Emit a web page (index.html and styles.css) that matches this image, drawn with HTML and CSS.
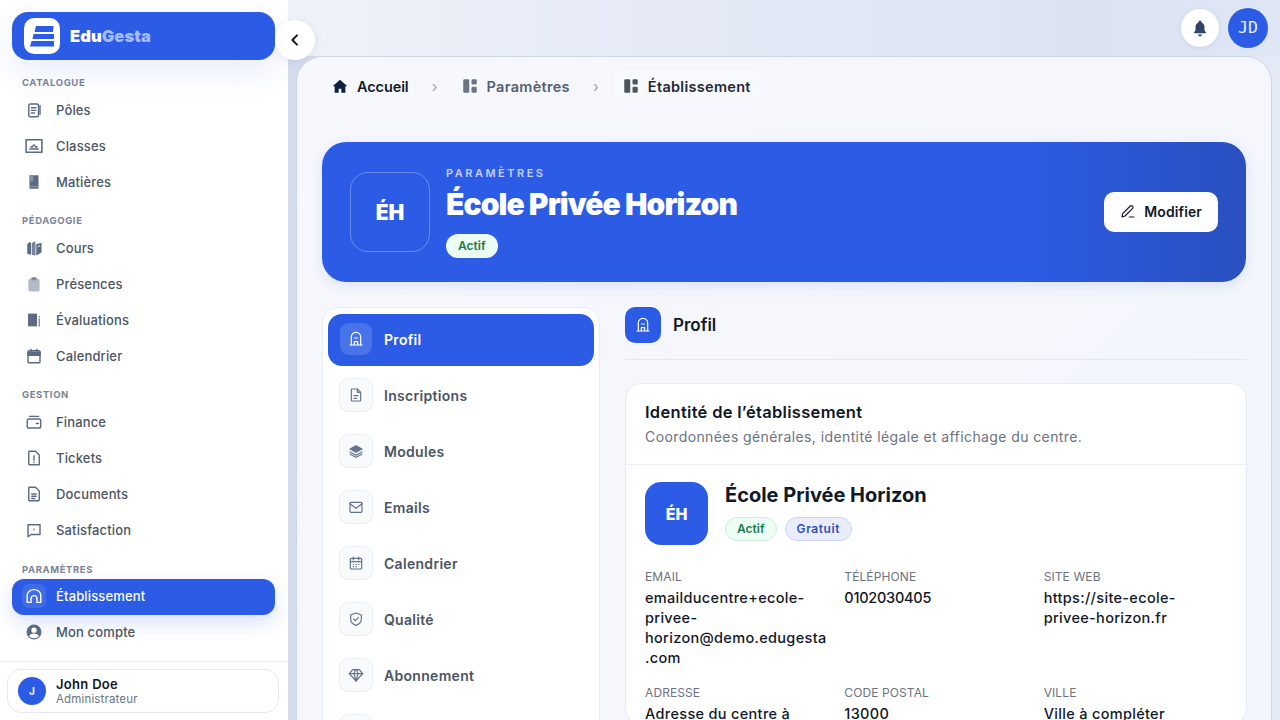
FILE: index.html
```html
<!DOCTYPE html>
<html lang="fr">
  <head>
    <meta charset="UTF-8" />
    <meta name="viewport" content="width=device-width, initial-scale=1.0" />
    <title>EduGesta - Établissement</title>
    <link rel="stylesheet" href="styles.css">
  </head>
  <body>
    <aside class="sidebar">
      <div class="brand">
        <div class="brand_logo">
          <svg viewBox="0 0 36 36" width="36" height="36">
            <path d="M12 8h17.500l-.5 6H10.500z" fill="#2c5ce6" />
            <path d="M9.500 16H30v5H8.500z" fill="#2c5ce6" />
            <path d="M7.500 23H30v5.500H6z" fill="#2c5ce6" />
          </svg>
        </div>
        <span class="brand_name">Edu<em>Gesta</em></span>
      </div>

      <nav class="menu">
        <div class="menu_group">
          <div class="menu_label">Catalogue</div>
          <a class="menu_item">
            <span class="menu_icon"><svg viewBox="0 0 24 24" class="ico"><rect x="5" y="4" width="13" height="17" rx="2" /><path d="M8.500 9h6M8.500 12.500h6M8.500 16h4M20 6v12" /></svg></span>
            Pôles
          </a>
          <a class="menu_item">
            <span class="menu_icon"><svg viewBox="0 0 24 24" class="ico ico-wide"><rect x="2.500" y="4.500" width="19" height="15" /><path d="M7 15.500h10M8.500 13h2M13.500 13h2M11 11h2" /></svg></span>
            Classes
          </a>
          <a class="menu_item">
            <span class="menu_icon"><svg viewBox="0 0 24 24" class="ico_fill"><path d="M6 3h12v18H6z" fill="#5d6b82" /><path d="M6 3h5v8H6z" fill="#8792a5" /><path d="M6 17.500h12V19H6z" fill="#8792a5" /></svg></span>
            Matières
          </a>
        </div>

        <div class="menu_group">
          <div class="menu_label">Pédagogie</div>
          <a class="menu_item">
            <span class="menu_icon"><svg viewBox="0 0 24 24" class="ico_fill"><path d="M3 7l3-3 2 1v16l-5-1.500z" fill="#5d6b82" /><path d="M9 6l3-3 2 1.500V22l-5-1z" fill="#77839a" /><path d="M15 7l7-2v13l-7 4z" fill="#5d6b82" /><path d="M17 10l3-1" stroke="#fff" stroke-width="1.200" /></svg></span>
            Cours
          </a>
          <a class="menu_item">
            <span class="menu_icon"><svg viewBox="0 0 24 24" class="ico_fill"><rect x="4.500" y="5" width="15" height="17" rx="2.500" fill="#b3bac8" /><rect x="8.500" y="3" width="7" height="4" rx="1" fill="#7f8a9e" /></svg></span>
            Présences
          </a>
          <a class="menu_item">
            <span class="menu_icon"><svg viewBox="0 0 24 24" class="ico_fill"><path d="M4 3.500h12v17H4z" fill="#5d6b82" /><path d="M18 10h2v10.500h-2zM18 6.500h2v2h-2z" fill="#8792a5" /></svg></span>
            Évaluations
          </a>
          <a class="menu_item">
            <span class="menu_icon"><svg viewBox="0 0 24 24" class="ico"><rect x="4" y="5" width="16" height="16" rx="1.500" /><path d="M4 7h16v4H4z" fill="#5d6b82" /><path d="M8 3v3M16 3v3" /></svg></span>
            Calendrier
          </a>
        </div>

        <div class="menu_group">
          <div class="menu_label">Gestion</div>
          <a class="menu_item">
            <span class="menu_icon"><svg viewBox="0 0 24 24" class="ico"><rect x="3" y="8" width="18" height="12" rx="2.500" /><path d="M6 4.500h12M15 14h3" /></svg></span>
            Finance
          </a>
          <a class="menu_item">
            <span class="menu_icon"><svg viewBox="0 0 24 24" class="ico"><path d="M6 3h8l5 5v13H6a1 1 0 0 1-1-1V4a1 1 0 0 1 1-1z" /><path d="M12 9v6M12 17.500v.5" /></svg></span>
            Tickets
          </a>
          <a class="menu_item">
            <span class="menu_icon"><svg viewBox="0 0 24 24" class="ico"><path d="M6 3h8l5 5v12a1 1 0 0 1-1 1H6a1 1 0 0 1-1-1V4a1 1 0 0 1 1-1z" /><path d="M9 12h6M9 15h6M9 18h4" /></svg></span>
            Documents
          </a>
          <a class="menu_item">
            <span class="menu_icon"><svg viewBox="0 0 24 24" class="ico"><path d="M4 5h16v13H8l-4 3z" /><path d="M12 11v.5" /></svg></span>
            Satisfaction
          </a>
        </div>

        <div class="menu_group menu_group-last">
          <div class="menu_label">Paramètres</div>
          <a class="menu_item menu_item-active">
            <span class="menu_icon"><svg viewBox="0 0 24 24" class="ico ico-white"><path d="M3 20.500V10.500C3 7 7 3.500 12 3.500s9 3.500 9 7v10h-5v-5a4 4 0 0 0-8 0v5z" /></svg></span>
            Établissement
          </a>
          <a class="menu_item">
            <span class="menu_icon"><svg viewBox="0 0 24 24" class="ico_fill"><circle cx="12" cy="12" r="10" fill="#5d6b82" /><circle cx="12" cy="9.500" r="3.500" fill="#fff" /><path d="M5.500 18c1-3 3.500-4 6.500-4s5.500 1 6.500 4c-3.500 3-9.500 3-13 0z" fill="#fff" /></svg></span>
            Mon compte
          </a>
        </div>
      </nav>

      <div class="sidebar_footer">
        <div class="user_card">
          <div class="user_avatar">J</div>
          <div>
            <div class="user_name">John Doe</div>
            <div class="user_role">Administrateur</div>
          </div>
        </div>
      </div>
    </aside>

    <button class="collapse_btn">
      <svg viewBox="0 0 24 24" width="16" height="16" fill="none" stroke="#111827" stroke-width="3" stroke-linecap="round" stroke-linejoin="round"><path d="M15 5l-7 7 7 7" /></svg>
    </button>

    <div class="main">
      <header class="topbar">
        <button class="bell_btn">
          <svg viewBox="0 0 24 24" width="18" height="18"><path d="M12 2a2 2 0 0 0-2 2v.500C7 5.500 6 8 6 11v4l-2 3v1h16v-1l-2-3v-4c0-3-1-5.500-4-6.500V4a2 2 0 0 0-2-2z" fill="#2f4468" /><path d="M9.500 20.500a2.500 2.500 0 0 0 5 0z" fill="#2f4468" /></svg>
        </button>
        <div class="top_avatar">JD</div>
      </header>

      <div class="panel">
        <div class="crumbs">
          <a class="crumb crumb-home">
            <svg viewBox="0 0 24 24" width="16" height="16"><path d="M12 2.500L1 12.500h3V22h6v-6h4v6h6v-9.500h3z" fill="#0f1f3d" /></svg>
            Accueil
          </a>
          <span class="crumb_sep">›</span>
          <a class="crumb">
            <svg viewBox="0 0 24 24" width="18" height="18" fill="#6b7484"><rect x="3" y="3" width="8" height="18" rx="1.500" /><rect x="14" y="3" width="7" height="7" rx="1.500" /><rect x="14" y="13" width="7" height="8" rx="1.500" /></svg>
            Paramètres
          </a>
          <span class="crumb_sep">›</span>
          <a class="crumb crumb-current">
            <svg viewBox="0 0 24 24" width="18" height="18" fill="#4b5563"><rect x="3" y="3" width="8" height="18" rx="1.500" /><rect x="14" y="3" width="7" height="7" rx="1.500" /><rect x="14" y="13" width="7" height="8" rx="1.500" /></svg>
            Établissement
          </a>
        </div>

        <section class="hero">
          <div class="hero_logo">ÉH</div>
          <div class="hero_text">
            <div class="hero_eyebrow">PARAMÈTRES</div>
            <h1 class="hero_title">École Privée Horizon</h1>
            <span class="hero_pill">Actif</span>
          </div>
          <button class="hero_btn">
            <svg viewBox="0 0 24 24" width="16" height="16" fill="none" stroke="#111827" stroke-width="1.800" stroke-linecap="round" stroke-linejoin="round"><path d="M3 21l1-5L15.500 4.500a2.500 2.500 0 0 1 3.500 3.500L7.500 19.500z" /><path d="M14 21h7" /></svg>
            Modifier
          </button>
        </section>

        <div class="columns">
          <div class="tabs">
            <a class="tab tab-active">
              <span class="tab_icon"><svg viewBox="0 0 24 24" class="tab_svg"><path d="M5 21V9a7 7 0 0 1 14 0v12" /><path d="M3 21h18M9.500 21v-5h5v5M10 10.500h4" /></svg></span>
              Profil
            </a>
            <a class="tab">
              <span class="tab_icon"><svg viewBox="0 0 24 24" class="tab_svg"><path d="M6 3h8l5 5v12a1 1 0 0 1-1 1H6a1 1 0 0 1-1-1V4a1 1 0 0 1 1-1z" /><path d="M14 3v5h5M9 13h6M9 17h4" /></svg></span>
              Inscriptions
            </a>
            <a class="tab">
              <span class="tab_icon"><svg viewBox="0 0 24 24" class="tab_svg"><path d="M12 4l9 5-9 5-9-5z" fill="#64748b" /><path d="M3 13.500l9 5 9-5M3 17l9 4.500 9-4.500" /></svg></span>
              Modules
            </a>
            <a class="tab">
              <span class="tab_icon"><svg viewBox="0 0 24 24" class="tab_svg"><rect x="3" y="5" width="18" height="15" rx="1.500" /><path d="M3 7l9 7 9-7" /></svg></span>
              Emails
            </a>
            <a class="tab">
              <span class="tab_icon"><svg viewBox="0 0 24 24" class="tab_svg"><rect x="3.500" y="5" width="17" height="16" rx="1.500" /><path d="M3.500 10h17M8 3v4M16 3v4M8 14h.500M12 14h.500M16 14h.500M8 17.500h.500M12 17.500h.500" /></svg></span>
              Calendrier
            </a>
            <a class="tab">
              <span class="tab_icon"><svg viewBox="0 0 24 24" class="tab_svg"><path d="M12 3l8 3v6c0 5-3.500 8-8 9.500C7.500 20 4 17 4 12V6z" /><path d="M8.500 12l2.500 2.500 4.500-4.500" /></svg></span>
              Qualité
            </a>
            <a class="tab">
              <span class="tab_icon"><svg viewBox="0 0 24 24" class="tab_svg"><path d="M7 4h10l5 6-10 11L2 10z" /><path d="M2 10h20M9 10l3 11 3-11M9 10l2-6M15 10l-2-6" /></svg></span>
              Abonnement
            </a>
            <a class="tab">
              <span class="tab_icon"></span>
            </a>
          </div>

          <div class="content">
            <div class="content_head">
              <span class="content_icon"><svg viewBox="0 0 24 24" class="tab_svg tab_svg-white"><path d="M5 21V9a7 7 0 0 1 14 0v12" /><path d="M3 21h18M9.500 21v-5h5v5M10 10.500h4" /></svg></span>
              <h2>Profil</h2>
            </div>

            <section class="card">
              <div class="card_head">
                <h3>Identité de l’établissement</h3>
                <p>Coordonnées générales, identité légale et affichage du centre.</p>
              </div>
              <div class="card_body">
                <div class="identity">
                  <div class="identity_logo">ÉH</div>
                  <div>
                    <div class="identity_name">École Privée Horizon</div>
                    <div class="badges">
                      <span class="badge badge-green">Actif</span>
                      <span class="badge badge-blue">Gratuit</span>
                    </div>
                  </div>
                </div>
                <div class="fields">
                  <div class="field">
                    <div class="field_label">Email</div>
                    <div class="field_value">emailducentre+ecole-<br>privee-<br>horizon@demo.edugesta<br>.com</div>
                  </div>
                  <div class="field">
                    <div class="field_label">Téléphone</div>
                    <div class="field_value field_value-tight">0102030405</div>
                  </div>
                  <div class="field">
                    <div class="field_label">Site web</div>
                    <div class="field_value">https://site-ecole-<br>privee-horizon.fr</div>
                  </div>
                  <div class="field">
                    <div class="field_label">Adresse</div>
                    <div class="field_value">Adresse du centre à</div>
                  </div>
                  <div class="field">
                    <div class="field_label">Code postal</div>
                    <div class="field_value">13000</div>
                  </div>
                  <div class="field">
                    <div class="field_label">Ville</div>
                    <div class="field_value">Ville à compléter</div>
                  </div>
                </div>
              </div>
            </section>
          </div>
        </div>
      </div>
    </div>
  </body>
</html>
```

FILE: styles.css
```css
* {
  box-sizing: border-box;
}
html,
body {
  height: 100%;
  margin: 0;
  overflow: hidden;
}
body {
  display: flex;
  font-family: Inter, "Noto Sans", sans-serif;
  color: #111827;
  background: #fff;
}
h1,
h2,
h3,
p {
  margin: 0;
}
button {
  font-family: inherit;
  border: none;
  padding: 0;
}

/* sidebar */
.sidebar {
  width: 288px;
  height: 720px;
  flex-shrink: 0;
  display: flex;
  flex-direction: column;
  background: #fff;
}
.brand {
  display: flex;
  align-items: center;
  gap: 10px;
  height: 48px;
  margin: 12px 13px 0 12px;
  padding-left: 12px;
  background: #2c5ce6;
  border-radius: 16px;
  box-shadow: 0 14px 30px rgba(44, 92, 230, 0.1);
}
.brand_logo {
  width: 36px;
  height: 36px;
  background: #fff;
  border-radius: 10px;
}
.brand_logo svg {
  display: block;
}
.brand_name {
  font-size: 16.500px;
  font-weight: 900;
  color: #fff;
  letter-spacing: 0.1px;
}
.brand_name em {
  font-style: normal;
  color: #a4bcf6;
}
.menu {
  flex: 1;
  padding: 2px 13px 0 12px;
}
.menu_group {
  padding-top: 10px;
}
.menu_group-last {
  padding-top: 11px;
}
.menu_label {
  height: 20px;
  line-height: 22px;
  padding-left: 10px;
  font-size: 9.500px;
  font-weight: 700;
  letter-spacing: 0.6px;
  text-transform: uppercase;
  color: #7b8496;
}
.menu_item {
  display: flex;
  align-items: center;
  gap: 10px;
  height: 36px;
  padding-left: 10px;
  font-size: 13px;
  font-weight: 500;
  letter-spacing: 0.15px;
  color: #4b5563;
  border-radius: 12px;
}
.menu_group-last .menu_item {
  padding-bottom: 2px;
}
.menu_item-active {
  color: #fff;
  background: #2c5ce6;
  box-shadow: 0 8px 18px rgba(44, 92, 230, 0.18);
}
.menu_icon {
  width: 24px;
  height: 24px;
  display: flex;
  align-items: center;
  justify-content: center;
  border-radius: 7px;
}
.menu_item-active .menu_icon {
  background: rgba(255, 255, 255, 0.1);
}
.ico,
.ico_fill {
  width: 18px;
  height: 18px;
}
.ico {
  fill: none;
  stroke: #5d6b82;
  stroke-width: 1.900;
  stroke-linecap: round;
  stroke-linejoin: round;
}
.ico-wide {
  width: 20px;
  height: 20px;
}
.ico-white {
  stroke: #fff;
}
.sidebar_footer {
  height: 59px;
  padding: 7px 9px 0 7px;
  border-top: 1px solid #e8ebf2;
}
.user_card {
  display: flex;
  align-items: center;
  gap: 10px;
  height: 44px;
  padding-left: 10px;
  background: #fff;
  border: 1px solid #e6e9f1;
  border-radius: 14px;
}
.user_avatar {
  width: 28px;
  height: 28px;
  border-radius: 50%;
  background: #2c5ce6;
  color: #fff;
  font-size: 10px;
  font-weight: 700;
  text-align: center;
  line-height: 28px;
}
.user_name {
  font-size: 13px;
  font-weight: 600;
  line-height: 16px;
  letter-spacing: 0.3px;
}
.user_role {
  font-size: 11.500px;
  line-height: 15px;
  color: #6b7280;
  letter-spacing: 0.15px;
}
.collapse_btn {
  position: absolute;
  left: 275px;
  top: 20px;
  z-index: 5;
  width: 40px;
  height: 40px;
  display: flex;
  align-items: center;
  justify-content: center;
  border-radius: 50%;
  background: #fff;
  box-shadow: 0 2px 8px rgba(60, 80, 140, 0.12);
}

/* main */
.main {
  flex: 1;
  min-width: 0;
  padding: 0 8px;
  background: linear-gradient(90deg, #d5dcee 0%, #e4e9f6 100%);
}
.topbar {
  height: 56px;
  margin: 0 -8px;
  padding-right: 12px;
  display: flex;
  align-items: center;
  justify-content: flex-end;
  gap: 9px;
  background: linear-gradient(90deg, #f0f2f9 0%, #e6eaf6 35%, #dbe3f3 80%, #dfe6f5 100%);
}
.bell_btn {
  width: 38px;
  height: 38px;
  display: flex;
  align-items: center;
  justify-content: center;
  border-radius: 50%;
  background: #fff;
  box-shadow: 0 1px 4px rgba(60, 80, 140, 0.12);
}
.top_avatar {
  width: 40px;
  height: 40px;
  border-radius: 50%;
  background: #2c5ce6;
  color: #eaf0ff;
  font-family: "DejaVu Sans Mono", monospace;
  font-size: 16.500px;
  text-align: center;
  line-height: 40px;
}
.panel {
  height: 720px;
  padding: 0 25px;
  background: linear-gradient(135deg, #f7f8fc 0%, #f2f5fc 100%);
  border: 1px solid #ced7ea;
  border-radius: 26px 26px 0 0;
}
.crumbs {
  display: flex;
  align-items: center;
  height: 32px;
  margin-top: 13px;
  padding-left: 10px;
}
.crumb {
  display: flex;
  align-items: center;
  gap: 8px;
  font-size: 14.500px;
  font-weight: 600;
  letter-spacing: 0.3px;
  color: #555f70;
}
.crumb-home {
  gap: 9px;
  letter-spacing: -0.1px;
  color: #111827;
}
.crumb-current {
  height: 32px;
  margin-left: -8px;
  padding: 0 9px 0 8px;
  color: #1f2937;
  background: #f8f9fd;
  border-radius: 8px;
}
.crumb_sep {
  width: 52px;
  text-align: center;
  font-size: 15px;
  color: #9aa3b2;
}

/* hero */
.hero {
  display: flex;
  align-items: center;
  gap: 16px;
  height: 140px;
  margin-top: 40px;
  padding: 0 28px;
  color: #fff;
  background: linear-gradient(90deg, #2c5ce6 0%, #2c5ce6 75%, #2a50bf 100%);
  border-radius: 24px;
  box-shadow: 0 4px 14px rgba(44, 92, 230, 0.12);
}
.hero_logo {
  width: 80px;
  height: 80px;
  display: flex;
  align-items: center;
  justify-content: center;
  font-size: 21px;
  font-weight: 900;
  border: 1px solid rgba(255, 255, 255, 0.28);
  border-radius: 18px;
}
.hero_text {
  flex: 1;
}
.hero_eyebrow {
  font-size: 11px;
  font-weight: 600;
  line-height: 14px;
  letter-spacing: 2.500px;
  color: #c3d2f8;
}
.hero_title {
  margin: 5px 0 11px;
  font-size: 30px;
  font-weight: 900;
  line-height: 38px;
  letter-spacing: -0.9px;
}
.hero_pill {
  display: inline-block;
  height: 24px;
  padding: 0 12px;
  font-size: 12px;
  font-weight: 600;
  line-height: 24px;
  color: #1f7a4d;
  background: #ecfdf3;
  border-radius: 12px;
}
.hero_btn {
  display: flex;
  align-items: center;
  gap: 8px;
  height: 40px;
  padding: 0 16px 2px;
  font-size: 14px;
  font-weight: 600;
  letter-spacing: 0.1px;
  color: #111827;
  background: #fff;
  border-radius: 10px;
}

/* tabs + content */
.columns {
  display: grid;
  grid-template-columns: 278px 1fr;
  gap: 25px;
  margin-top: 25px;
}
.tabs {
  display: flex;
  flex-direction: column;
  gap: 4px;
  padding: 6px 5px;
  background: #fff;
  border: 1px solid #e9edf5;
  border-radius: 16px;
}
.tab {
  display: flex;
  align-items: center;
  gap: 11px;
  height: 52px;
  padding: 0 0 2px 11px;
  font-size: 14px;
  font-weight: 600;
  letter-spacing: 0.3px;
  color: #4b5563;
  border-radius: 14px;
}
.tab-active {
  color: #fff;
  background: #2c5ce6;
}
.tab_icon {
  width: 34px;
  height: 34px;
  display: flex;
  align-items: center;
  justify-content: center;
  background: #f9fafc;
  border: 1px solid #e7ebf2;
  border-radius: 10px;
}
.tab-active .tab_icon {
  background: rgba(255, 255, 255, 0.14);
  background-clip: padding-box;
  border-color: transparent;
}
.tab_svg {
  width: 16px;
  height: 16px;
  fill: none;
  stroke: #64748b;
  stroke-width: 1.800;
  stroke-linecap: round;
  stroke-linejoin: round;
}
.tab-active .tab_svg,
.tab_svg-white {
  stroke: #fff;
}
.content {
  margin-right: -1px;
}
.content_head {
  display: flex;
  align-items: center;
  gap: 12px;
  padding-bottom: 16px;
  border-bottom: 1px solid #e3e7ef;
}
.content_icon {
  width: 36px;
  height: 36px;
  display: flex;
  align-items: center;
  justify-content: center;
  background: #2c5ce6;
  border-radius: 10px;
}
.content_head h2 {
  font-size: 17px;
  font-weight: 600;
}
.card {
  margin-top: 23px;
  background: #fff;
  border: 1px solid #e6eaf3;
  border-radius: 16px;
}
.card_head {
  height: 81px;
  padding: 17px 19px 0;
  border-bottom: 1px solid #eceff5;
}
.card_head h3 {
  font-size: 16.500px;
  font-weight: 600;
  line-height: 22px;
  letter-spacing: 0.3px;
}
.card_head p {
  margin-top: 4px;
  font-size: 14px;
  line-height: 20px;
  letter-spacing: 0.4px;
  color: #6b7280;
}
.card_body {
  padding: 17px 19px 0;
}
.identity {
  display: flex;
  gap: 17px;
}
.identity_logo {
  width: 63px;
  height: 63px;
  display: flex;
  align-items: center;
  justify-content: center;
  font-size: 16px;
  font-weight: 800;
  color: #fff;
  background: #2c5ce6;
  border-radius: 16px;
}
.identity_name {
  font-size: 20px;
  font-weight: 700;
  line-height: 26px;
}
.badges {
  display: flex;
  gap: 8px;
  margin-top: 9px;
}
.badge {
  height: 24px;
  padding: 0 11px;
  font-size: 12px;
  font-weight: 600;
  line-height: 22px;
  border: 1px solid;
  border-radius: 12px;
}
.badge-green {
  color: #1f7a4d;
  background: #ecfdf3;
  border-color: #cdeedb;
}
.badge-blue {
  color: #2f4fb5;
  background: #e9edfa;
  border-color: #ccd5f1;
  letter-spacing: 0.55px;
}
.fields {
  display: grid;
  grid-template-columns: repeat(3, 1fr);
  column-gap: 16px;
  row-gap: 16px;
  margin-top: 23px;
}
.field_label {
  font-size: 12px;
  line-height: 18px;
  letter-spacing: 0.1px;
  text-transform: uppercase;
  color: #6b7280;
}
.field_value {
  margin-top: 2px;
  font-size: 14.500px;
  font-weight: 500;
  line-height: 20px;
  letter-spacing: 0.32px;
  color: #111827;
}
.field_value-tight {
  letter-spacing: -0.25px;
}
```
